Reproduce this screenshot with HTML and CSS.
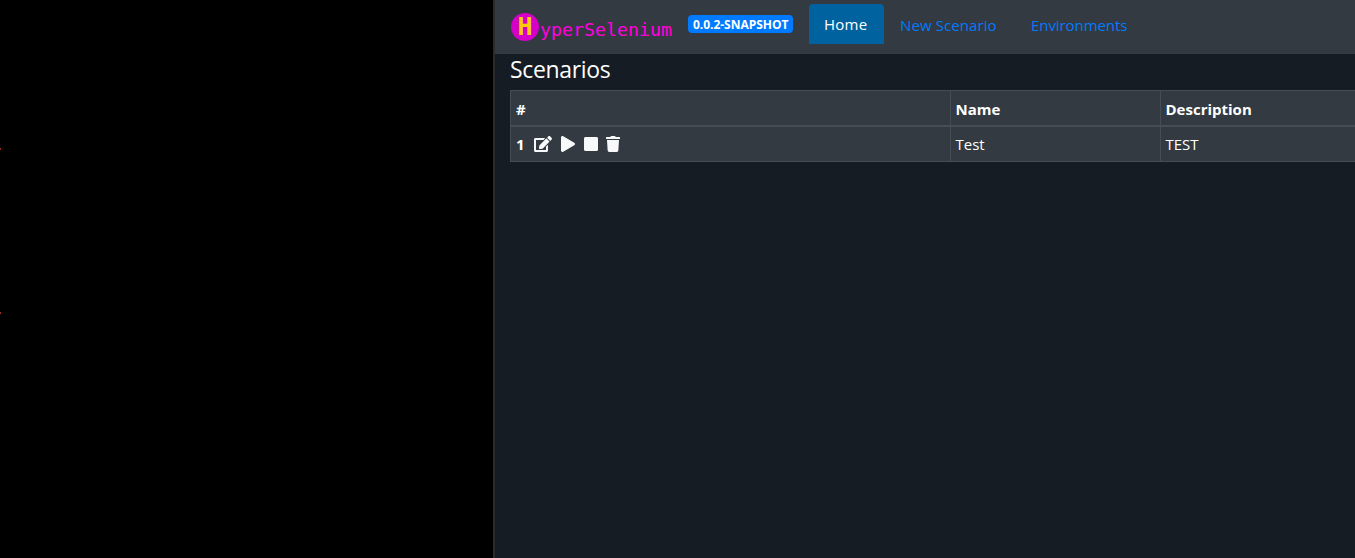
FILE: index.html
```html
<!DOCTYPE html>
<html lang="en">
<head>
<meta charset="utf-8">
<title>HyperSelenium</title>
<link rel="stylesheet" href="styles.css">
</head>
<body>
<div class="app">
  <aside class="browser"><i class="tick"></i><i class="tick tick-second"></i></aside>
  <main class="panel">
    <header class="navbar">
      <a class="brand"><span class="brand-mark">H</span><span class="brand-name">yperSelenium</span></a>
      <span class="badge"><span class="badge-text">0.0.2-SNAPSHOT</span></span>
      <nav class="tabs">
        <a class="tab tab-active">Home</a>
        <a class="tab tab-new">New Scenario</a>
        <a class="tab tab-env">Environments</a>
      </nav>
    </header>
    <section class="content">
      <h1 class="title">Scenarios</h1>
      <div class="table">
        <div class="row row-head">
          <div class="cell">#</div>
          <div class="cell">Name</div>
          <div class="cell">Description</div>
        </div>
        <div class="row row-body">
          <div class="cell actions">
            <b class="index">1</b>
            <svg class="icon edit" viewBox="0 0 576 512"><path d="M402.600 83.200l90.200 90.200c3.800 3.800 3.800 10 0 13.800L274.400 405.600l-92.800 10.300c-12.400 1.400-22.900-9.100-21.500-21.500l10.300-92.800L388.800 83.200c3.800-3.800 10-3.800 13.800 0zm162-22.900l-48.800-48.800c-15.200-15.200-39.900-15.200-55.200 0l-35.400 35.400c-3.800 3.800-3.800 10 0 13.800l90.200 90.200c3.800 3.800 10 3.800 13.800 0l35.400-35.400c15.200-15.300 15.200-40 0-55.200zM384 346.200V448H64V128h229.800c3.200 0 6.200-1.300 8.500-3.500l40-40c7.600-7.600 2.200-20.500-8.500-20.500H48C21.500 64 0 85.500 0 112v352c0 26.500 21.500 48 48 48h352c26.500 0 48-21.500 48-48V306.200c0-10.700-12.900-16-20.500-8.500l-40 40c-2.200 2.300-3.500 5.300-3.500 8.500z"/></svg>
            <svg class="icon play" viewBox="0 0 448 512"><path d="M424.400 214.700L72.400 6.600C43.800-10.300 0 6.100 0 47.900V464c0 37.500 40.700 60.100 72.400 41.300l352-208c31.400-18.500 31.500-64.100 0-82.600z"/></svg>
            <svg class="icon stop" viewBox="0 0 448 512"><path d="M400 32H48C21.500 32 0 53.500 0 80v352c0 26.500 21.500 48 48 48h352c26.500 0 48-21.500 48-48V80c0-26.500-21.500-48-48-48z"/></svg>
            <svg class="icon trash" viewBox="0 0 448 512"><path d="M432 32H312l-9.400-18.700A24 24 0 0 0 281.100 0H166.800a23.700 23.700 0 0 0-21.400 13.300L136 32H16A16 16 0 0 0 0 48v32a16 16 0 0 0 16 16h416a16 16 0 0 0 16-16V48a16 16 0 0 0-16-16zM53.200 467a48 48 0 0 0 47.900 45h245.800a48 48 0 0 0 47.900-45L416 128H32z"/></svg>
          </div>
          <div class="cell">Test</div>
          <div class="cell">TEST</div>
        </div>
      </div>
    </section>
  </main>
</div>
</body>
</html>
```
FILE: styles.css
```css
* { box-sizing: border-box; }
body {
  margin: 0;
  background: #000;
  color: #fff;
  font: 15px/24px "Open Sans", "Noto Sans", sans-serif;
}
.app { display: flex; width: 1355px; height: 558px; }
.browser { width: 493px; flex: none; padding-top: 148px; }
.tick { display: block; width: 1px; height: 2px; background: #a32a16; }
.tick-second { margin-top: 162px; }
.panel {
  flex: 1;
  min-width: 0;
  border-left: 2px solid #2b2b2b;
  background: #161c23;
}
.navbar {
  display: flex;
  align-items: flex-start;
  height: 54px;
  padding: 4px 0 0 16px;
  background: #333a41;
  white-space: nowrap;
}
.brand { display: flex; width: 177px; padding-top: 9px; color: #f0d; }
.brand-mark {
  width: 28px;
  height: 28px;
  border-radius: 50%;
  background: #d400c8;
  color: #fc0;
  font: bold 25px/27px "DejaVu Sans Mono", monospace;
  text-align: center;
}
.brand-name {
  padding: 5px 0 0 1px;
  font: 18.300px/24px "DejaVu Sans Mono", monospace;
}
.badge {
  width: 105px;
  height: 18px;
  margin: 11px 16px 0 0;
  padding-left: 5px;
  border-radius: 4px;
  background: #007bff;
  font-size: 12px;
  font-weight: 700;
  line-height: 19px;
}
.badge-text { letter-spacing: -0.030px; }
.tabs { display: flex; }
.tab { padding: 9px 0 0 16px; color: #007bff; }
.tab-active {
  width: 75px;
  height: 40px;
  padding: 8px 0 0 15px;
  border-radius: 4px 4px 0 0;
  background: #0063a0;
  color: #fff;
  letter-spacing: 0.250px;
}
.tab-new { width: 131px; letter-spacing: 0.100px; }
.tab-env { letter-spacing: -0.070px; }
.content { padding-left: 15px; }
.title {
  margin: 0;
  height: 36px;
  font-size: 23px;
  font-weight: 400;
  line-height: 31px;
  letter-spacing: -0.350px;
}
.table {
  border: 1px solid #454d55;
  border-right: 0;
  background: #333a41;
}
.row {
  display: grid;
  grid-template-columns: 439px 210px 1fr;
  height: 34px;
}
.row-head { height: 36px; border-bottom: 2px solid #454d55; font-weight: 700; }
.cell { padding: 6px 0 0 5px; line-height: 24px; white-space: nowrap; }
.cell + .cell { padding-left: 4.500px; border-left: 1px solid #454d55; }
.row-body .cell { padding-top: 5px; }
.actions { display: flex; }
.index { width: 18px; }
.icon { height: 16px; margin-top: 4px; fill: #f8f9fa; }
.edit { width: 18px; margin-right: 9px; }
.play { width: 14px; margin-right: 9px; }
.stop { width: 14px; margin-right: 8px; }
.trash { width: 14px; }
```
